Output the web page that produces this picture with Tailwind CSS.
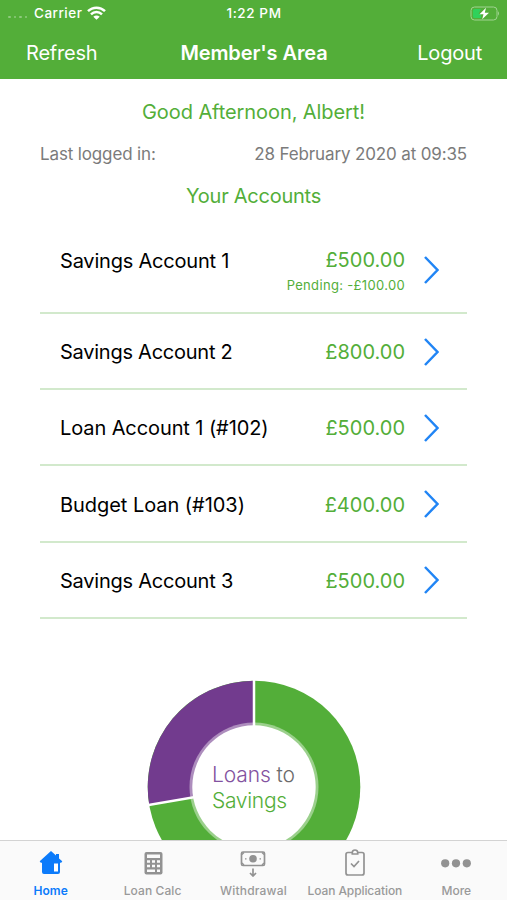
<!DOCTYPE html>
<html lang="en">
<head>
<meta charset="utf-8">
<meta name="viewport" content="width=device-width">
<title>Member's Area</title>
<script src="https://cdn.jsdelivr.net/npm/@tailwindcss/browser@4"></script>
</head>
<body class="bg-white">
<div class="w-[507px] h-[900px] flex flex-col overflow-hidden font-['Inter',sans-serif] whitespace-nowrap">
  <header class="h-[79px] shrink-0 bg-[#53ae39] text-white">
    <div class="h-[26px] grid grid-cols-3 items-center text-[13.5px] font-medium pl-2 pr-[7px]">
      <div class="flex items-center">
        <div class="flex gap-[3px] w-[26px] pt-[8px]">
          <i class="size-[2.5px] rounded-full bg-white/35"></i><i class="size-[2.5px] rounded-full bg-white/35"></i><i class="size-[2.5px] rounded-full bg-white/35"></i><i class="size-[2.5px] rounded-full bg-white/35"></i>
        </div>
        <span class="tracking-[0.5px]">Carrier</span>
        <svg class="ml-[5px]" width="19" height="14" viewBox="0 0 19 14" fill="none" stroke="#fff" stroke-width="2.5"><path d="M1 5.2C5.8.5 13.2.5 18 5.2M4 8.3c3.1-3 7.9-3 11 0"/><path d="M9.500 13.800 6.300 10.700c1.800-1.600 4.600-1.600 6.400 0z" fill="#fff" stroke="none"/></svg>
      </div>
      <span class="text-center tracking-[0.6px]">1:22 PM</span>
      <svg class="justify-self-end" width="30" height="15" viewBox="0 0 30 15"><rect x="1" y="1" width="26" height="13" rx="3.500" fill="none" stroke="#a1d392" stroke-width="1"/><path d="M28 5.300q2 2.200 0 4.400z" fill="#a1d392"/><path d="M4.500 3H11L8.500 8H11v4H4.500Q3 12 3 10.500v-6Q3 3 4.500 3z" fill="#30d15b"/><path d="m16 1.800-6.500 6.400h4l-1.300 5L19 6.700h-4.200z" fill="#fff"/></svg>
    </div>
    <div class="h-[53px] grid grid-cols-3 items-center pl-[26px] pr-[25px] text-[20px]">
      <span class="tracking-[-0.2px]">Refresh</span>
      <span class="text-center font-semibold tracking-[-0.1px]">Member's Area</span>
      <span class="text-right tracking-[-0.2px]">Logout</span>
    </div>
  </header>
  <main class="flex-1 overflow-hidden px-10">
    <h1 class="mt-[21px] h-6 leading-6 text-center text-[20px] tracking-[-0.08px] text-[#53ae39]">Good Afternoon, Albert!</h1>
    <div class="mt-[19px] h-[22px] leading-[22px] flex justify-between text-[17px] tracking-[-0.14px] text-[#7b7b7b]"><span>Last logged in:</span><span>28 February 2020 at 09:35</span></div>
    <h2 class="mt-[19px] h-6 leading-6 text-center text-[20px] tracking-[-0.25px] text-[#53ae39]">Your Accounts</h2>
    <ul class="mt-[20px] text-[20px] text-black">
      <li class="h-[86px] border-b-2 border-[#d2e9cc] pl-5 pr-[28px] flex items-center">
        <span class="flex-1 -mt-[18px] tracking-[-0.2px]">Savings Account 1</span>
        <div class="text-right text-[#53ae39] mr-[19px] leading-[25px] mt-[5px]"><div>£500.00</div><div class="text-[13px] leading-[25px] tracking-[0.33px]">Pending: -£100.00</div></div>
        <svg width="15" height="28" viewBox="0 0 15 28" fill="none" stroke="#2185f5" stroke-width="2.500"><path d="m1 1 12.500 13L1 27"/></svg>
      </li>
      <li class="h-[76px] border-b-2 border-[#d2e9cc] pl-5 pr-[28px] pt-px flex items-center">
        <span class="flex-1 pt-px tracking-[-0.25px]">Savings Account 2</span><span class="pt-px text-[#53ae39] mr-[19px]">£800.00</span>
        <svg width="15" height="28" viewBox="0 0 15 28" fill="none" stroke="#2185f5" stroke-width="2.500"><path d="m1 1 12.500 13L1 27"/></svg>
      </li>
      <li class="h-[76px] border-b-2 border-[#d2e9cc] pl-5 pr-[28px] pt-px flex items-center">
        <span class="flex-1 pt-px tracking-[-0.1px]">Loan Account 1 (#102)</span><span class="pt-px text-[#53ae39] mr-[19px]">£500.00</span>
        <svg width="15" height="28" viewBox="0 0 15 28" fill="none" stroke="#2185f5" stroke-width="2.500"><path d="m1 1 12.500 13L1 27"/></svg>
      </li>
      <li class="h-[77px] border-b-2 border-[#d2e9cc] pl-5 pr-[28px] pt-px flex items-center">
        <span class="flex-1 pt-px tracking-[-0.05px]">Budget Loan (#103)</span><span class="pt-px text-[#53ae39] mr-[19px]">£400.00</span>
        <svg width="15" height="28" viewBox="0 0 15 28" fill="none" stroke="#2185f5" stroke-width="2.500"><path d="m1 1 12.500 13L1 27"/></svg>
      </li>
      <li class="h-[76px] border-b-2 border-[#d2e9cc] pl-5 pr-[28px] flex items-center">
        <span class="flex-1 pt-px tracking-[-0.23px]">Savings Account 3</span><span class="pt-px text-[#53ae39] mr-[19px]">£500.00</span>
        <svg width="15" height="28" viewBox="0 0 15 28" fill="none" stroke="#2185f5" stroke-width="2.500"><path d="m1 1 12.500 13L1 27"/></svg>
      </li>
    </ul>
    <div class="relative w-[214px] h-[214px] mt-[61px] ml-[107px]">
      <svg width="214" height="214" viewBox="0 0 214 214"><circle cx="107" cy="107" r="106.300" fill="#53ae39"/><path d="M107 107V.7A106.300 106.300 0 0 0 2.200 124.500z" fill="#723b8e"/><circle cx="107" cy="107" r="64.500" fill="#fff" fill-opacity=".42"/><path d="M107 0v107L0 125.200" stroke="#fff" stroke-width="2.500" fill="none"/><circle cx="107" cy="107" r="61.700" fill="#fff"/></svg>
      <div class="absolute left-[65px] top-[82px] text-[21px] leading-[26px] font-light tracking-[-0.3px]"><div class="text-[#6c6c6c] tracking-[-0.1px]"><span class="text-[#8352a0]">Loans</span> to</div><div class="text-[#53ae39]">Savings</div></div>
    </div>
  </main>
  <nav class="h-[60px] shrink-0 border-t border-[#d3d3d3] bg-[#fafafa] grid grid-cols-5 text-[12px] font-medium text-[#999] text-center">
    <div class="flex flex-col items-center text-[#0c7bfa]"><svg class="mt-[8px]" width="26" height="28" viewBox="0 0 26 28"><path fill="#0c7bfa" d="M13 2 18 6.500V5h3v4.500L24.300 12.300 23 14 22 13.400V23q0 2-2 2H6q-2 0-2-2v-9.600l-1 .6-1.300-1.700z"/><path fill="#fff" d="M16 14.500h4v8h-4z"/></svg><span class="leading-[15px] mt-[6px] font-semibold tracking-[0.1px]">Home</span></div>
    <div class="flex flex-col items-center pl-[1px]"><svg class="mt-[8px]" width="26" height="28" viewBox="0 0 26 28"><rect x="4.500" y="3" width="18" height="22.500" rx="2" fill="#929292"/><g fill="#fafafa"><path d="M7 5.500h13V9H7z"/><path d="M7 11.200h3v2.600H7zm5 0h3v2.600h-3zm5 0h3v2.600h-3zM7 15.700h3v2.600H7zm5 0h3v2.600h-3zm5 0h3v2.600h-3zM7 20.500h8V23H7zm10 0h3V23h-3z"/></g></svg><span class="leading-[15px] mt-[6px] tracking-[0.1px]">Loan Calc</span></div>
    <div class="flex flex-col items-center"><svg class="mt-[8px]" width="26" height="28" viewBox="0 0 26 28" fill="none" stroke="#929292" stroke-width="1.700"><rect x="1.500" y="3" width="23" height="13.500" rx="1.500"/><circle cx="13" cy="9.800" r="3.800" fill="#929292" stroke="none"/><path d="M5 9.800h1.500m13 0H21M2 5.500l2-2m18 0 2 2M2 14l2 2m18 0 2-2" stroke-width="1.300"/><path d="M13 19.500v7m-3-2.500 3 3 3-3"/></svg><span class="leading-[15px] mt-[6px] tracking-[0.2px]">Withdrawal</span></div>
    <div class="flex flex-col items-center"><svg class="mt-[8px]" width="26" height="28" viewBox="0 0 26 28" fill="none" stroke="#929292" stroke-width="1.700"><path d="M10 3.500H6q-2 0-2 2v18.500q0 2 2 2h14q2 0 2-2v-18.500q0-2-2-2h-4"/><path d="M10.300 5V3.300Q10.500 1 13 1t2.700 2.300V5z"/><path d="m9 14.500 3 3 5-5.500"/></svg><span class="leading-[15px] mt-[6px] tracking-[-0.1px]">Loan Application</span></div>
    <div class="flex flex-col items-center"><svg class="mt-[8px]" width="32" height="28" viewBox="0 0 32 28" fill="#929292"><circle cx="5.200" cy="14.300" r="4.100"/><circle cx="16" cy="14.300" r="4.100"/><circle cx="26.800" cy="14.300" r="4.100"/></svg><span class="leading-[15px] mt-[6px]">More</span></div>
  </nav>
</div>
</body>
</html>
